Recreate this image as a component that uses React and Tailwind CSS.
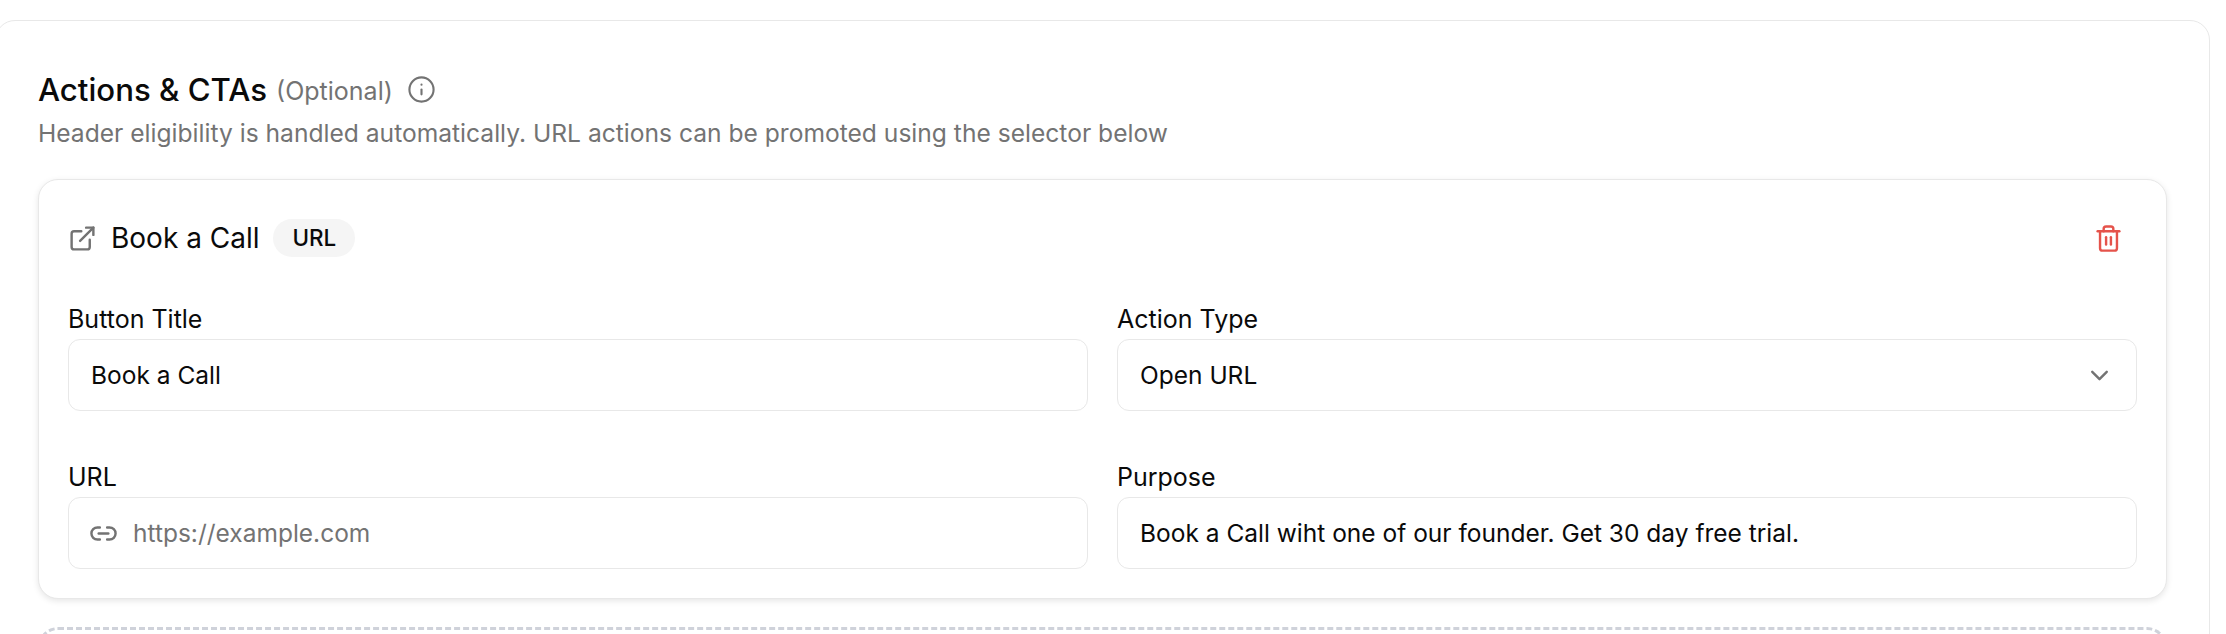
// Actions & CTAs form section
import React from 'react';
import { ChevronDown, ExternalLink, Info, Link2, Trash2 } from 'lucide-react';

const Field = ({ label, children }) => (
    <div className="flex flex-col">
        <label className="mb-[3px] h-[34px] text-[25px] leading-[34px] font-[430] text-[#0a0a0a]">{label}</label>
        {children}
    </div>
);

const boxClass = 'flex h-[72px] w-full items-center rounded-[12px] border border-[#e8e8e8] bg-white px-[22px] text-[24.5px] text-[#0a0a0a]';

const App = () => {
    return (
        <div className="h-[634px] overflow-hidden bg-white pt-[20px] font-['Inter',sans-serif]">
            <section className="ml-[-5px] h-[700px] w-[2215px] rounded-t-[20px] border border-[#e8e8e8] bg-white px-[42px] pt-[45px]">
                <div className="flex items-center">
                    <h2 className="text-[31.2px] leading-[44px] font-[550] text-[#0a0a0a]">Actions &amp; CTAs</h2>
                    <span className="ml-[9px] mt-[3px] text-[25px] leading-[44px] text-[#737373]">(Optional)</span>
                    <Info size={29} strokeWidth={1.75} className="ml-[14px] text-[#737373]" />
                </div>
                <p className="mt-[3px] text-[24.6px] leading-[34px] text-[#737373]">
                    Header eligibility is handled automatically. URL actions can be promoted using the selector below
                </p>

                <div className="mt-[29px] rounded-[20px] border border-[#e8e8e8] bg-white px-[29px] pb-[29px] pt-[39px] shadow-[0_2px_6px_rgba(0,0,0,0.1)]">
                    <div className="flex h-[38px] items-center justify-between">
                        <div className="flex items-center">
                            <ExternalLink size={29} className="text-[#737373]" />
                            <span className="ml-[14px] text-[28px] font-[420] text-[#0a0a0a]">Book a Call</span>
                            <span className="ml-[14px] flex h-[38px] items-center rounded-full bg-[#f5f5f5] px-[19px] text-[22.4px] font-medium text-[#0a0a0a]">URL</span>
                        </div>
                        <Trash2 size={29} className="mr-[14px] text-[#e5534b]" />
                    </div>

                    <div className="mt-[45px] grid grid-cols-2 gap-x-[29px] gap-y-[49px]">
                        <Field label="Button Title">
                            <input readOnly value="Book a Call" className={boxClass} />
                        </Field>
                        <Field label="Action Type">
                            <div className={`${boxClass} justify-between`}>
                                <span>Open URL</span>
                                <ChevronDown size={29} className="text-[#737373]" />
                            </div>
                        </Field>
                        <Field label="URL">
                            <div className={`${boxClass} gap-[15px] pl-[20px]`}>
                                <Link2 size={29} className="shrink-0 text-[#737373]" />
                                <input readOnly placeholder="https://example.com" className="mt-[1px] w-full outline-none placeholder:text-[#737373]" />
                            </div>
                        </Field>
                        <Field label="Purpose">
                            <input readOnly value="Book a Call wiht one of our founder. Get 30 day free trial." className={boxClass} />
                        </Field>
                    </div>
                </div>

                <div className="mt-[28px] h-[120px] rounded-[20px] border-[3px] border-dashed border-[#cfd2da]" />
            </section>
        </div>
    );
};

export default App;
